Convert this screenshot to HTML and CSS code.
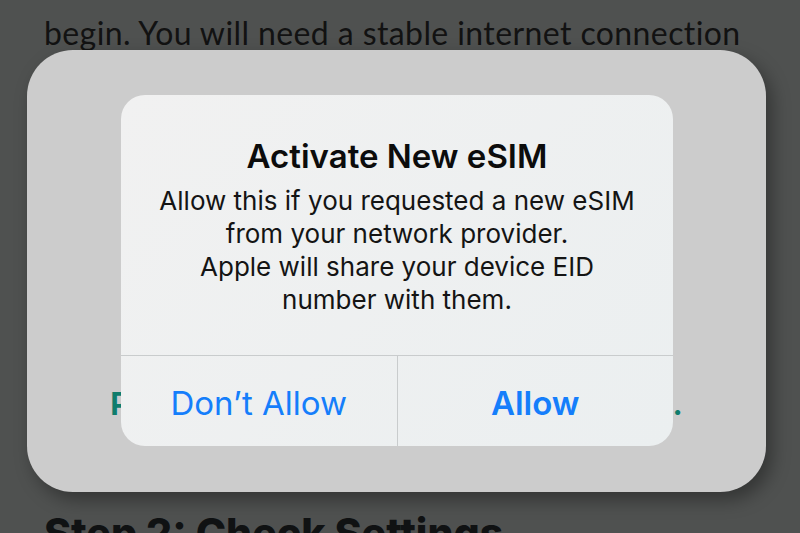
FILE: index.html
```html
<!DOCTYPE html>
<html lang="en">
<head>
    <meta charset="UTF-8">
    <meta name="viewport" content="width=device-width, initial-scale=1.0">
    <title>Activate eSIM - Guide</title>
    <link rel="stylesheet" href="styles.css">
</head>
<body>
    <div class="article">
        <p class="intro">
            Make sure your iPhone is ready before you try to<br>
            begin. You will need a stable internet connection
        </p>

        <!-- Screenshot of the prompt -->
        <div class="shot">
            <p class="shot-text">Press Allow to continue the activation.</p>

            <div class="alert">
                <div class="alert-body">
                    <h2 class="alert-title">Activate New eSIM</h2>
                    <p class="alert-message">
                        Allow this if you requested a new eSIM<br>
                        from your network provider.<br>
                        Apple will share your device EID<br>
                        number with them.
                    </p>
                </div>
                <div class="alert-actions">
                    <button class="alert-button">Don’t Allow</button>
                    <button class="alert-button primary">Allow</button>
                </div>
            </div>
        </div>

        <h2 class="step-title">Step 2: Check Settings</h2>
    </div>
</body>
</html>
```

FILE: styles.css
```css
/* Base Styles */
body {
    margin: 0;
    padding: 0;
    background-color: #4f5150;
    font-family: Lato, "Open Sans", sans-serif;
    color: #111111;
    overflow: hidden;
}

.article {
    height: 533px;
    overflow: hidden;
}

.intro {
    margin: -44px 0 0 44px;
    font-size: 32px;
    letter-spacing: 0.4px;
    line-height: 51px;
    white-space: nowrap;
    color: #121212;
}

/* Screenshot card */
.shot {
    position: relative;
    box-sizing: border-box;
    width: 739px;
    height: 442px;
    margin: -8px 0 0 27px;
    padding-top: 334px;
    background-color: #cccccc;
    border-radius: 46px;
    box-shadow: 6px 8px 18px rgba(0, 0, 0, 0.35);
}

.shot-text {
    margin: 0;
    text-align: center;
    font-family: Inter, sans-serif;
    font-weight: 700;
    font-size: 30.6px;
    line-height: 40px;
    color: #0f7d6c;
    white-space: nowrap;
}

/* iOS alert */
.alert {
    position: absolute;
    top: 45px;
    left: 94px;
    width: 552px;
    height: 351px;
    display: flex;
    flex-direction: column;
    background: linear-gradient(135deg, #f1f1f1, #ebeff0);
    border-radius: 24px;
    overflow: hidden;
    font-family: Inter, sans-serif;
}

.alert-body {
    flex: 1;
    padding-top: 41px;
    text-align: center;
}

.alert-title {
    margin: 0;
    font-size: 33px;
    font-weight: 600;
    line-height: 40px;
    color: #0c0c0c;
}

.alert-message {
    margin: 8px 0 0;
    font-size: 26px;
    line-height: 33px;
    color: #141414;
    white-space: nowrap;
}

.alert-actions {
    display: flex;
    height: 90px;
    border-top: 1px solid #c9cccd;
}

.alert-button {
    flex: 1;
    margin: 0;
    padding: 4px 0 0;
    border: none;
    background: none;
    font-family: Inter, sans-serif;
    font-size: 33px;
    font-weight: 400;
    color: #157efb;
}

.alert-button + .alert-button {
    border-left: 1px solid #c9cccd;
}

.alert-button.primary {
    font-weight: 600;
}

.step-title {
    margin: 16px 0 0 44px;
    font-family: Inter, sans-serif;
    font-size: 41px;
    font-weight: 800;
    line-height: 50px;
    color: #101213;
}
```
